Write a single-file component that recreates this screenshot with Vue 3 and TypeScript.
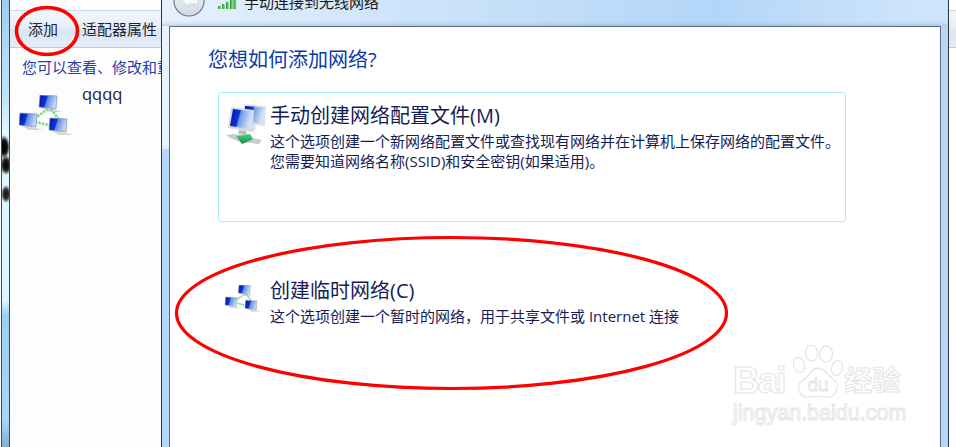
<script setup lang="ts">
const toolbarItems = ["添加", "适配器属性"];

const pawPads = [
  { cx: 6, cy: 21, rx: 5.5, ry: 7.5, r: -20 },
  { cx: 18.5, cy: 9, rx: 6, ry: 8, r: -8 },
  { cx: 33, cy: 10, rx: 6.5, ry: 8, r: 6 },
  { cx: 44, cy: 24, rx: 5.5, ry: 7.5, r: 15 },
];

const signalBars = [
  { x: 1, h: 3 },
  { x: 5, h: 5 },
  { x: 9, h: 7 },
  { x: 13, h: 9 },
  { x: 16.5, h: 9 },
];

// three linked screens, same drawing at both sizes
const linkedScreens = [
  { x: 20, y: 0 },
  { x: 0, y: 18 },
  { x: 30, y: 23 },
];
</script>

<template>
  <div class="page">
    <div class="edge"></div>

    <div class="back-window">
      <div class="toolbar">
        <span v-for="item in toolbarItems" :key="item">{{ item }}</span>
      </div>
      <div class="hint">您可以查看、修改和重新排序</div>
      <div class="net-entry">
        <svg class="net-icon" viewBox="0 0 57 42" width="57" height="42">
          <defs>
            <linearGradient id="scr" x1="0" y1="0" x2="1" y2="0.25">
              <stop offset="0" stop-color="#00109c" />
              <stop offset="0.45" stop-color="#1034d4" />
              <stop offset="0.52" stop-color="#5f8be4" />
              <stop offset="1" stop-color="#c6d8f4" />
            </linearGradient>
          </defs>
          <path d="M29 14 L15 24 M32 14 L41 26 M16 27 L34 31" stroke="#6fe08a" stroke-width="2.6" stroke-dasharray="2.5 1" fill="none" />
          <g v-for="(s, i) in linkedScreens" :key="i" :transform="`translate(${s.x} ${s.y})`">
            <path d="M1 12 L17 15 L24 17 L10 17 Z" fill="#bdbdbd" opacity="0.6" />
            <path d="M1 0 L18 1 L17 14 L0 12 Z" fill="url(#scr)" stroke="#7f93ae" stroke-width="0.7" />
          </g>
        </svg>
        <span class="net-name">qqqq</span>
      </div>
    </div>

    <div class="wizard">
      <div class="wizard-head">
        <svg class="back-btn" viewBox="0 0 32 32" width="32" height="32">
          <defs>
            <linearGradient id="btn" x1="0" y1="0" x2="0" y2="1">
              <stop offset="0" stop-color="#f2f5f8" />
              <stop offset="1" stop-color="#cfd9e4" />
            </linearGradient>
          </defs>
          <circle cx="16" cy="16" r="15" fill="url(#btn)" stroke="#6d7a88" stroke-width="1.2" />
          <path d="M8 15 L16 9 L16 12 L25 12 L25 19 L16 19 L16 22 Z" fill="#f8fafc" stroke="#c2ccd6" stroke-width="0.8" />
        </svg>
        <svg class="signal" viewBox="0 0 20 9" width="20" height="9">
          <defs>
            <linearGradient id="bar" x1="0" y1="0" x2="1" y2="0">
              <stop offset="0" stop-color="#1f8f2f" />
              <stop offset="1" stop-color="#a6e0a6" />
            </linearGradient>
          </defs>
          <rect v-for="b in signalBars" :key="b.x" :x="b.x" :y="9 - b.h" width="3" :height="b.h" fill="url(#bar)" />
        </svg>
        <span class="wizard-title">手动连接到无线网络</span>
      </div>

      <div class="wizard-body">
        <h2 class="question">您想如何添加网络?</h2>

        <div class="option option-active">
          <svg class="option-icon large" viewBox="0 0 42 48" width="42" height="48">
            <defs>
              <linearGradient id="scr2" x1="0" y1="0" x2="1" y2="0.25">
                <stop offset="0" stop-color="#00109c" />
                <stop offset="0.45" stop-color="#1034d4" />
                <stop offset="0.52" stop-color="#6f9ae8" />
                <stop offset="1" stop-color="#d4e2f6" />
              </linearGradient>
              <linearGradient id="plug" x1="0" y1="0" x2="0" y2="1">
                <stop offset="0" stop-color="#4fd67c" />
                <stop offset="1" stop-color="#0c8a3e" />
              </linearGradient>
            </defs>
            <path d="M19 6 L41 8 L40 28 L31 27 L30 33 L25 34 L18 24 Z" fill="#dfe3e8" />
            <path d="M20 8 L39 9.5 L38 26 L19 23 Z" fill="url(#scr2)" />
            <path d="M6 9 L29 12 L28 34 L3 30 Z" fill="#d6dae0" />
            <path d="M8 11 L27 13.5 L26 31 L5 28 Z" fill="url(#scr2)" />
            <path d="M14 32 L21 33 L22 37 L13 36 Z" fill="#b9bdc2" />
            <path d="M1 37 L9 36 L37 42 L34 46 L26 45 L17 45 L5 40 Z" fill="#c9cdd0" />
            <path d="M11 38 L25 36 L28 41 L17 46 Z" fill="url(#plug)" />
          </svg>
          <div class="option-text">
            <div class="option-title">手动创建网络配置文件(M)</div>
            <div class="option-desc">这个选项创建一个新网络配置文件或查找现有网络并在计算机上保存网络的配置文件。</div>
            <div class="option-desc">您需要知道网络名称(SSID)和安全密钥(如果适用)。</div>
          </div>
        </div>

        <div class="option">
          <svg class="option-icon small" viewBox="0 0 57 42" width="38" height="28">
            <path d="M29 14 L15 24 M32 14 L41 26 M16 27 L34 31" stroke="#6fe08a" stroke-width="2.6" stroke-dasharray="2.5 1" fill="none" />
            <g v-for="(s, i) in linkedScreens" :key="i" :transform="`translate(${s.x} ${s.y})`">
              <path d="M1 12 L17 15 L24 17 L10 17 Z" fill="#bdbdbd" opacity="0.6" />
              <path d="M1 0 L18 1 L17 14 L0 12 Z" fill="url(#scr)" stroke="#7f93ae" stroke-width="0.7" />
            </g>
          </svg>
          <div class="option-text">
            <div class="option-title">创建临时网络(C)</div>
            <div class="option-desc">这个选项创建一个暂时的网络，用于共享文件或 Internet 连接</div>
          </div>
        </div>

        <div class="watermark">
          <div class="mark-top">
            <span class="mark-bai">Bai</span>
            <svg class="paw" viewBox="0 0 50 55" width="50" height="55">
              <ellipse v-for="(p, i) in pawPads" :key="i" :cx="p.cx" :cy="p.cy" :rx="p.rx" :ry="p.ry" :transform="`rotate(${p.r} ${p.cx} ${p.cy})`" fill="#fff" stroke="#e6e6e6" stroke-width="1.3" />
              <path d="M25 24 C32 24 35 32 41 36 C48 41 43 54 33 53 C27 52 22 52 16 53 C6 54 2 42 9 37 C16 33 18 24 25 24 Z" fill="#fff" stroke="#e6e6e6" stroke-width="1.3" />
              <text x="25" y="47" text-anchor="middle" class="paw-du">du</text>
            </svg>
            <span class="mark-jy">经验</span>
          </div>
          <div class="mark-url">jingyan.baidu.com</div>
        </div>
      </div>
    </div>

    <div class="behind">
      <div class="toolbar"></div>
    </div>

    <!-- red hand-drawn marks on top of the screenshot -->
    <svg class="marks" viewBox="0 0 956 447" width="956" height="447">
      <ellipse cx="47" cy="31" rx="30.5" ry="23.5" fill="none" stroke="#ff0000" stroke-width="3.6" />
      <ellipse cx="451.5" cy="313" rx="275" ry="75.5" fill="none" stroke="#ff0000" stroke-width="3.2" />
    </svg>
  </div>
</template>

<style>
html,
body {
  margin: 0;
  background: #fff;
}
</style>

<style scoped>
.page {
  position: relative;
  display: flex;
  width: 956px;
  height: 447px;
  overflow: hidden;
  background: #fff;
  font-family: "Open Sans", "Noto Sans CJK SC", sans-serif;
  color: #151c55;
}

.edge {
  box-sizing: border-box;
  flex: none;
  width: 10px;
  border-left: 1px solid #fff;
  border-right: 1px solid #3b4650;
  box-shadow: inset 1px 0 0 #3b4650;
  background:
    radial-gradient(ellipse 6px 12px at 3px 147px, #000 0, #111 55%, transparent 100%),
    radial-gradient(ellipse 6px 10px at 5px 165px, #000 0, #222 55%, transparent 100%),
    radial-gradient(ellipse 5px 9px at 5px 194px, #111 0, #333 55%, transparent 100%),
    linear-gradient(to bottom, #9ccdf3 0, #c4e4fa 100px, #dcf7ff 130px, #dcf8ff 300px, #9cd0f3 315px, #a8d6f6 420px, #7fb0d4 447px);
}

.back-window {
  flex: none;
  width: 151px;
  background: #fdfdfd;
  overflow: hidden;
}

.toolbar {
  display: flex;
  gap: 24px;
  align-items: center;
  box-sizing: border-box;
  height: 38px;
  margin-top: 10px;
  padding: 0 0 2px 18px;
  border-top: 1px solid #ccd9e8;
  border-bottom: 1px solid #b9cce0;
  background: linear-gradient(to bottom, #f2f6fb 0, #e6eef8 48%, #d9e5f4 52%, #e4edf8 100%);
  font-size: 15px;
  color: #1d2430;
  white-space: nowrap;
}

.hint {
  margin-top: 9px;
  padding-left: 12px;
  font-size: 15px;
  line-height: 20px;
  color: #1f3fae;
  white-space: nowrap;
}

.net-entry {
  display: flex;
  align-items: flex-start;
  gap: 6px;
  padding: 18px 0 0 9px;
}

.net-name {
  margin-top: -11px;
  font-size: 16.5px;
  line-height: 20px;
  color: #1a1a2c;
}

.wizard {
  position: relative;
  box-sizing: border-box;
  display: flex;
  flex-direction: column;
  flex: none;
  width: 788px;
  padding: 0 7px;
  border-left: 1px solid #2b3540;
  border-right: 1px solid #2b3540;
  background:
    linear-gradient(to bottom, #eaf3fd 0, #e6f1fc 148px, #b5d7fb 150px) left / 7px 100% no-repeat,
    linear-gradient(to bottom, #b9d6f2 0, #b5d7fb 100%) right / 7px 100% no-repeat;
}

.wizard-head {
  display: flex;
  align-items: flex-start;
  height: 26px;
  margin: 0 -7px;
  padding-left: 11px;
  overflow: hidden;
  background: linear-gradient(100deg, #e6f1fc 0, #cfe4fa 30%, #b3d6f8 70%, #cde4fc 95%);
  box-shadow: inset 0 -4px 4px -3px rgba(120, 150, 180, 0.5);
}

.back-btn {
  flex: none;
  margin-top: -15px;
}

.signal {
  flex: none;
  margin-left: 12px;
}

.wizard-title {
  margin: -9px 0 0 7px;
  font-size: 15px;
  line-height: 22px;
  color: #1a1a1a;
}

.wizard-body {
  position: relative;
  flex: 1;
  padding: 20px 0 0 38px;
  border: 1px solid #5d6c80;
  border-bottom: 0;
  background: #fff;
}

.question {
  margin: 0;
  font-size: 20px;
  font-weight: 400;
  line-height: 26px;
  color: #0a3aa8;
}

.option {
  display: flex;
  box-sizing: border-box;
  width: 628px;
  margin: 45px 0 0 10px;
  padding: 11px 0 0 6px;
  border: 1px solid transparent;
  border-radius: 3px;
}

.option-active {
  height: 130px;
  margin-top: 19px;
  border-color: #aeeefa;
}

.option-icon {
  flex: none;
  margin-right: 3px;
}

.option-icon.large {
  margin-top: -6px;
}

.option-icon.small {
  margin-top: 6px;
  margin-right: 7px;
}

.option-title {
  margin-bottom: 3px;
  font-size: 20px;
  line-height: 24px;
  white-space: nowrap;
}

.option-desc {
  font-size: 15px;
  line-height: 20px;
  white-space: nowrap;
}

.watermark {
  position: absolute;
  left: 563px;
  top: 316px;
  width: 180px;
  color: #fff;
  -webkit-text-stroke: 1px #e4e4e4;
  font-family: "Liberation Sans", "Noto Sans CJK SC", sans-serif;
}

.mark-top {
  display: flex;
  align-items: flex-end;
  height: 56px;
}

.mark-bai {
  font-size: 37px;
  font-weight: 700;
  line-height: 36px;
  letter-spacing: -2px;
}

.paw {
  flex: none;
  margin: 0 0 0 8px;
}

.paw-du {
  font-size: 19px;
  font-family: "Liberation Sans", sans-serif;
  fill: #fff;
  stroke: #e0e0e0;
  stroke-width: 0.8px;
}

.mark-jy {
  margin-left: 2px;
  font-size: 28px;
  font-weight: 700;
  line-height: 34px;
}

.mark-url {
  font-size: 21.5px;
  line-height: 28px;
  white-space: nowrap;
}

.behind {
  flex: none;
  width: 7px;
  overflow: hidden;
  background: #fdfdfd;
}

.behind .toolbar {
  padding: 0;
}

.marks {
  position: absolute;
  left: 0;
  top: 0;
  pointer-events: none;
}
</style>
